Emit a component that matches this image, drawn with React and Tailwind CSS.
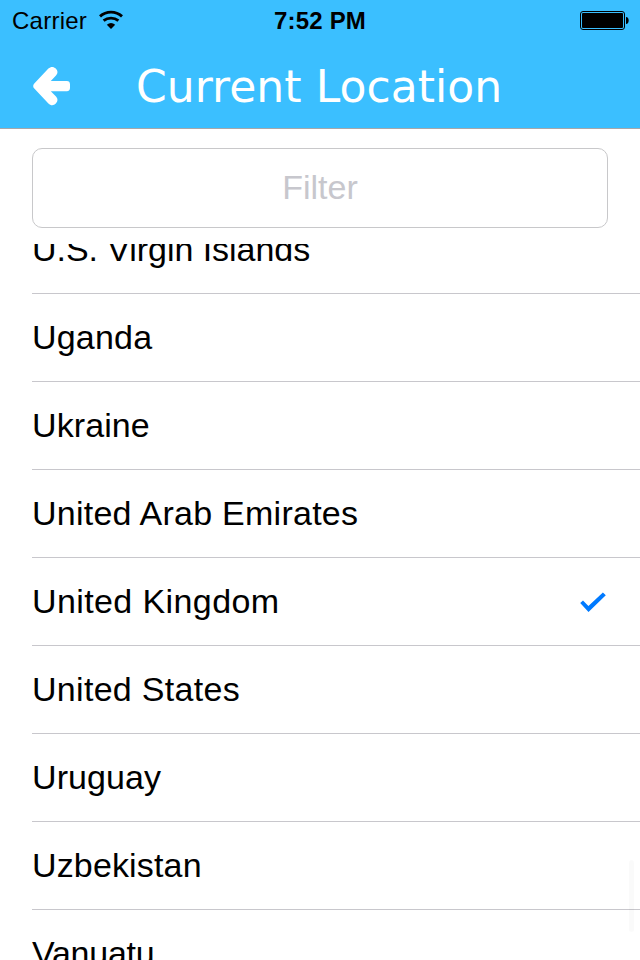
const countries = [
  { name: 'U.S. Virgin Islands', spacing: 'tracking-[-0.05px]' },
  { name: 'Uganda', spacing: 'tracking-[0.2px]' },
  { name: 'Ukraine', spacing: 'tracking-[0.1px]' },
  { name: 'United Arab Emirates', spacing: 'tracking-[0.25px]' },
  { name: 'United Kingdom', spacing: 'tracking-[0.4px]', selected: true },
  { name: 'United States', spacing: 'tracking-[0.3px]' },
  { name: 'Uruguay', spacing: 'tracking-[0.1px]' },
  { name: 'Uzbekistan', spacing: 'tracking-[0.15px]' },
  { name: 'Vanuatu', spacing: 'tracking-[-0.25px]' },
];

function WifiIcon() {
  return (
    <svg className="ml-[11px] h-[20px] w-[26px]" viewBox="0 0 26 20" fill="none" stroke="#000">
      <path d="M2 6.4A16.4 16.4 0 0 1 24 6.4" strokeWidth="2.9" />
      <path d="M5.6 10.7A12 12 0 0 1 20.4 10.7" strokeWidth="2.9" />
      <path d="M13 19L8.8 14.8A6.6 6.6 0 0 1 17.2 14.8Z" fill="#000" stroke="none" />
    </svg>
  );
}

function BatteryIcon() {
  return (
    <svg className="h-[20px] w-[50px]" viewBox="0 0 50 20">
      <rect x="0.5" y="1.5" width="44" height="18" rx="2.5" fill="none" stroke="#000" />
      <rect x="2" y="3" width="41" height="15" rx="1" fill="#000" />
      <path d="M46 7C49.6 7 49.6 14 46 14Z" fill="#000" />
    </svg>
  );
}

function BackArrow() {
  return (
    <svg className="h-[40px] w-[38px]" viewBox="0 0 38 40" fill="#fff">
      <path d="M2.3 17.4L16.4 2.6C18.8 .3 21.6 .4 23.8 2.6C26 4.8 26.1 7.4 24 9.5L18.8 15H34.8C37 15 38 16.2 38 18.4V21.8C38 24 37 25.2 34.8 25.2H18.8L24 30.6C26.1 32.7 26 35.3 23.8 37.5C21.6 39.7 18.8 39.8 16.4 37.4L2.3 22.6C.8 20.9 .8 19.1 2.3 17.4Z" />
    </svg>
  );
}

function CheckIcon() {
  return (
    <svg className="h-[20px] w-[26px]" viewBox="0 0 26 20" fill="#007aff">
      <path d="M.2 11L3 8.4L8.4 14L22.9 .4L25.8 3.3L8.5 20Z" />
    </svg>
  );
}

export default function App() {
  return (
    <div className="relative flex h-[960px] w-[640px] flex-col overflow-hidden bg-white font-['Liberation_Sans',Arial,sans-serif] text-black">
      <header className="h-[129px] shrink-0 border-b border-[#a7a7aa] bg-[#3bbfff]">
        <div className="grid h-[40px] grid-cols-3 items-center">
          <div className="flex items-center pl-[12px]">
            <span className="pt-[2px] text-[24px] leading-[38px] tracking-[0.25px]">Carrier</span>
            <WifiIcon />
          </div>
          <span className="pt-[2px] text-center text-[24px] leading-[38px] font-bold tracking-[0.2px]">7:52 PM</span>
          <div className="flex justify-end pr-[10px]">
            <BatteryIcon />
          </div>
        </div>
        <div className="flex h-[88px] items-center pt-[4px] pl-[32px]">
          <button aria-label="Back">
            <BackArrow />
          </button>
          <h1 className="ml-[66px] pt-[1px] font-['DejaVu_Sans',Verdana,sans-serif] text-[44px] leading-[52px] tracking-[0.05px] whitespace-nowrap text-white">
            Current Location
          </h1>
        </div>
      </header>
      <div className="shrink-0 px-[32px] pt-[19px] pb-[16px]">
        <input
          placeholder="Filter"
          className="block h-[80px] w-full rounded-[10px] border border-[#c8c8ca] bg-white pb-[2px] text-center text-[34px] placeholder:text-[#c7c7cd]"
        />
      </div>
      <div className="min-h-0 flex-1 overflow-hidden">
        <ul className="-mt-[38px]">
          {countries.map(({ name, spacing, selected }) => (
            <li key={name} className="ml-[32px] flex h-[88px] items-center justify-between border-b border-[#c8c7cc] pr-[34px]">
              <span className={`pb-[2px] text-[34px] leading-[40px] whitespace-nowrap ${spacing}`}>{name}</span>
              {selected && <CheckIcon />}
            </li>
          ))}
        </ul>
      </div>
      <div className="absolute top-[860px] right-[6px] h-[72px] w-[5px] rounded-full bg-black/[0.02]" />
    </div>
  );
}
